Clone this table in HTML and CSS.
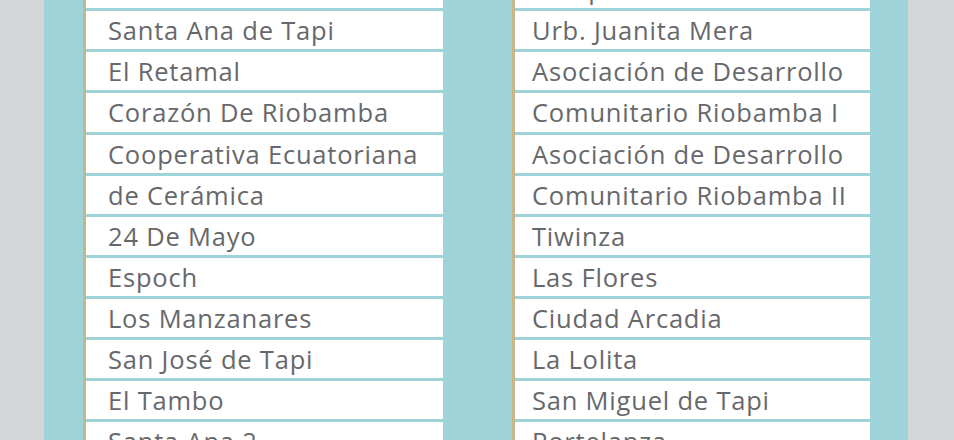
FILE: index.html
```html
<!DOCTYPE html>
<html lang="es">
<head>
<meta charset="utf-8">
<link rel="stylesheet" href="styles.css">
</head>
<body>
<div class="page">
  <div class="panel">
    <div class="cols">
      <div class="col col-left">
        <div class="row">Bellavista</div>
        <div class="row">Santa Ana de Tapi</div>
        <div class="row">El Retamal</div>
        <div class="row">Corazón De Riobamba</div>
        <div class="row">Cooperativa Ecuatoriana</div>
        <div class="row">de Cerámica</div>
        <div class="row">24 De Mayo</div>
        <div class="row">Espoch</div>
        <div class="row">Los Manzanares</div>
        <div class="row">San José de Tapi</div>
        <div class="row">El Tambo</div>
        <div class="row">Santa Ana 2</div>
      </div>
      <div class="col col-right">
        <div class="row">Campamento</div>
        <div class="row">Urb. Juanita Mera</div>
        <div class="row">Asociación de Desarrollo</div>
        <div class="row">Comunitario Riobamba I</div>
        <div class="row">Asociación de Desarrollo</div>
        <div class="row">Comunitario Riobamba II</div>
        <div class="row">Tiwinza</div>
        <div class="row">Las Flores</div>
        <div class="row">Ciudad Arcadia</div>
        <div class="row">La Lolita</div>
        <div class="row">San Miguel de Tapi</div>
        <div class="row">Portelanza</div>
      </div>
    </div>
  </div>
</div>
</body>
</html>
```

FILE: styles.css
```css
html, body {
  margin: 0;
  padding: 0;
}
body {
  background: #d3d5d8;
  font-family: "Open Sans", "Liberation Sans", sans-serif;
  overflow: hidden;
}
.page {
  width: 954px;
  height: 440px;
  overflow: hidden;
}
.panel {
  margin-left: 44px;
  width: 864px;
  height: 440px;
  background: #9ed4d9;
  box-sizing: border-box;
  padding: 0 38px 0 39px;
  overflow: hidden;
}
.cols {
  display: grid;
  grid-template-columns: 360px 358px;
  column-gap: 69px;
  margin-top: -29.8px;
}
.col {
  display: flex;
  flex-direction: column;
  gap: 3px;
  border-left: 3px solid #c8b68a;
}
.row {
  height: 38.1px;
  background: #ffffff;
  color: #67686b;
  font-size: 25.5px;
  font-weight: 400;
  letter-spacing: 0.8px;
  line-height: 38px;
  white-space: nowrap;
  overflow: hidden;
}
.col-left .row {
  padding-left: 22px;
}
.col-right .row {
  padding-left: 17px;
}
```
